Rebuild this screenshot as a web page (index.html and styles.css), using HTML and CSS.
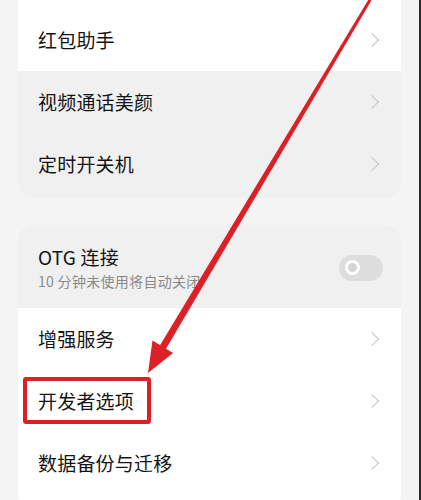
FILE: index.html
```html
<!DOCTYPE html>
<html lang="zh-CN">
<head>
<meta charset="utf-8">
<link rel="stylesheet" href="styles.css">
</head>
<body>
<div class="page">
  <div class="card card-top">
    <div class="row row-first white"><span class="label">红包助手</span><span class="chev"></span></div>
    <div class="row"><span class="label">视频通话美颜</span><span class="chev"></span></div>
    <div class="row"><span class="label">定时开关机</span><span class="chev"></span></div>
  </div>
  <div class="card card-second">
    <div class="row row-otg">
      <div class="texts">
        <span class="label">OTG 连接</span>
        <span class="sub">10 分钟未使用将自动关闭</span>
      </div>
      <span class="toggle"><span class="knob"></span></span>
    </div>
    <div class="row white"><span class="label">增强服务</span><span class="chev"></span></div>
    <div class="row white"><span class="label">开发者选项</span><span class="chev"></span></div>
    <div class="row white row-last"><span class="label">数据备份与迁移</span><span class="chev"></span></div>
  </div>
  <div class="highlight"></div>
  <svg class="arrow" width="421" height="500" viewBox="0 0 421 500">
    <polygon points="368.8,-1 371.4,0.5 165.4,349.8 159.4,346.2" fill="#dd1f26"/>
    <polygon points="148,373 152.5,340.5 173,353" fill="#dd1f26"/>
  </svg>
</div>
</body>
</html>
```
FILE: styles.css
```css
* { box-sizing: border-box; }
html, body {
  margin: 0;
  padding: 0;
  background: #f3f3f3;
}
body {
  width: 421px;
  height: 500px;
  overflow: hidden;
  font-family: "Noto Sans CJK SC", "Noto Sans", sans-serif;
  color: #141414;
}
.page {
  position: relative;
  width: 421px;
  height: 500px;
  padding: 0 20px 0 18px;
  border-right: 2px solid #2b2b2b;
  background: #f4f4f4;
}
.card {
  background: #f0f0f0;
  border-radius: 16px;
  overflow: hidden;
  width: 383px;
}
.card-top {
  border-top-left-radius: 0;
  border-top-right-radius: 0;
  padding-bottom: 3px;
}
.card-second {
  margin-top: 27px;
}
.row {
  height: 62px;
  display: flex;
  align-items: center;
  justify-content: space-between;
  padding: 0 20px 0 20px;
}
.row-first {
  height: 71px;
  padding-top: 9px;
}
.row-last {
  height: 80px;
  padding-bottom: 18px;
}
.white { background: #ffffff; }
.label {
  font-size: 19px;
  line-height: 24px;
  font-weight: 400;
  letter-spacing: 0.2px;
}
.chev {
  width: 10px;
  height: 10px;
  border-top: 1.5px solid #c4c4c4;
  border-right: 1.5px solid #c4c4c4;
  transform: rotate(45deg);
  margin-right: 4px;
}
.row-otg {
  height: 83px;
  padding-top: 2px;
}
.texts {
  display: flex;
  flex-direction: column;
  gap: 2px;
}
.sub {
  font-size: 14px;
  line-height: 20px;
  color: #8a8a8a;
  letter-spacing: 0.3px;
}
.toggle {
  width: 44px;
  height: 26px;
  border-radius: 13px;
  background: #dddddd;
  display: flex;
  align-items: center;
  padding-left: 6px;
  margin-right: -2px;
}
.knob {
  width: 15px;
  height: 15px;
  border-radius: 50%;
  border: 3px solid #ffffff;
  background: #d4d4d4;
}
.highlight {
  position: absolute;
  left: 23px;
  top: 377px;
  width: 128px;
  height: 47px;
  border: 4px solid #dd1f26;
  border-radius: 3px;
}
.arrow {
  position: absolute;
  left: 0;
  top: 0;
}
```
